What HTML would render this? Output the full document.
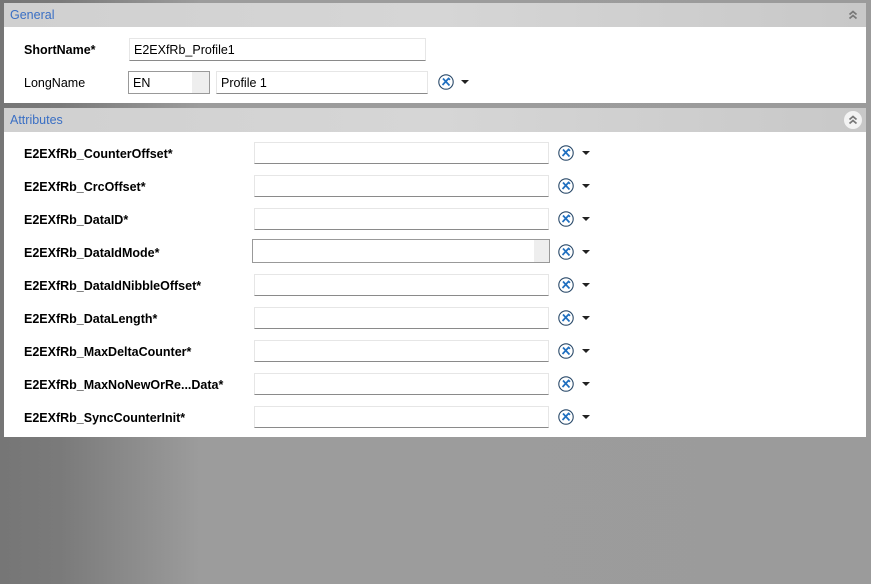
<!DOCTYPE html><html><head><style>
body{margin:0;width:871px;height:584px;overflow:hidden;background:linear-gradient(90deg,#767676 0px,#7a7a7a 60px,#9c9c9c 200px,#9b9b9b 871px);font-family:"Liberation Sans",sans-serif;font-size:12.5px;position:relative}
.p{position:absolute;left:4px;width:862px;background:#fff}
.h{position:absolute;left:4px;width:862px;height:24px;background:linear-gradient(90deg,#d0d0d0,#d6d6d6 50%,#c8c8c8);color:#3a6fc4;font-size:12.5px;line-height:24px;text-indent:6px}
.l{position:absolute;left:24px;color:#000}
.b{font-weight:bold}
.i{position:absolute;height:21px;background:#fff;border:1px solid #e6e6e6;border-bottom:1px solid #8a8a8a;box-sizing:border-box;font-size:12.5px;line-height:20px;padding-left:4px}
.ic{position:absolute;width:16px;height:16px}
.ar{position:absolute;width:0;height:0;border-left:4px solid transparent;border-right:4px solid transparent;border-top:4px solid #222}
.chev{position:absolute;right:8px;top:7px;width:10px;height:10px}
</style></head><body>
<div class="h" style="top:3px">General<svg class="chev" viewBox="0 0 10 10"><path d="M1.5 4.5L5 1.5L8.5 4.5M1.5 8.5L5 5.5L8.5 8.5" fill="none" stroke="#777" stroke-width="1.8"/></svg></div>
<div class="p" style="top:27px;height:76px"></div>
<div class="h" style="top:108px">Attributes<div style="position:absolute;right:4px;top:3px;width:18px;height:18px;border-radius:50%;background:#f3f3f3"></div><svg class="chev" style="right:8px" viewBox="0 0 10 10"><path d="M1.5 4.5L5 1.5L8.5 4.5M1.5 8.5L5 5.5L8.5 8.5" fill="none" stroke="#777" stroke-width="1.8"/></svg></div>
<div class="p" style="top:132px;height:305px"></div>
<div class="l b" style="top:43px">ShortName*</div>
<div class="i" style="left:129px;top:38px;width:297px;height:23px;line-height:22px">E2EXfRb_Profile1</div>
<div class="l" style="top:76px">LongName</div>
<div class="i" style="left:128px;top:71px;width:82px;height:23px;line-height:22px;border:1px solid #999">EN<div style="position:absolute;right:0;top:0;width:17px;height:21px;background:#eee"></div></div>
<div class="i" style="left:216px;top:71px;width:212px;height:23px;line-height:22px">Profile 1</div>
<svg class="ic" style="left:438px;top:74px" viewBox="0 0 16 16"><circle cx="8" cy="8" r="7.2" fill="none" stroke="#2a4a6a" stroke-width="1.1"/><path d="M5 4.5L11.5 11.5M10.5 4.5L4.5 11M10 3.8L12 5.8" stroke="#1f6fc0" stroke-width="1.7"/></svg>
<div class="ar" style="left:461px;top:80px"></div>
<div id="rows"></div>
<script>
var n=["E2EXfRb_CounterOffset*","E2EXfRb_CrcOffset*","E2EXfRb_DataID*","E2EXfRb_DataIdMode*","E2EXfRb_DataIdNibbleOffset*","E2EXfRb_DataLength*","E2EXfRb_MaxDeltaCounter*","E2EXfRb_MaxNoNewOrRe...Data*","E2EXfRb_SyncCounterInit*"],h="";
n.forEach(function(t,k){var y=142+k*33;
h+='<div class="l b" style="top:'+(y+5)+'px">'+t+'</div>';
if(k==3)h+='<div class="i" style="left:252px;top:'+(y-2)+'px;width:298px;height:24px;border:1px solid #999"><div style="position:absolute;right:0;top:0;width:15px;height:22px;background:#eee"></div></div>';
else h+='<div class="i" style="left:254px;top:'+y+'px;width:295px;height:22px"></div>';
h+='<svg class="ic" style="left:558px;top:'+(y+3)+'px" viewBox="0 0 16 16"><circle cx="8" cy="8" r="7.2" fill="none" stroke="#2a4a6a" stroke-width="1.1"/><path d="M5 4.5L11.5 11.5M10.5 4.5L4.5 11M10 3.8L12 5.8" stroke="#1f6fc0" stroke-width="1.7"/></svg><div class="ar" style="left:582px;top:'+(y+9)+'px"></div>';});
document.getElementById("rows").innerHTML=h;
</script>
</body></html>
